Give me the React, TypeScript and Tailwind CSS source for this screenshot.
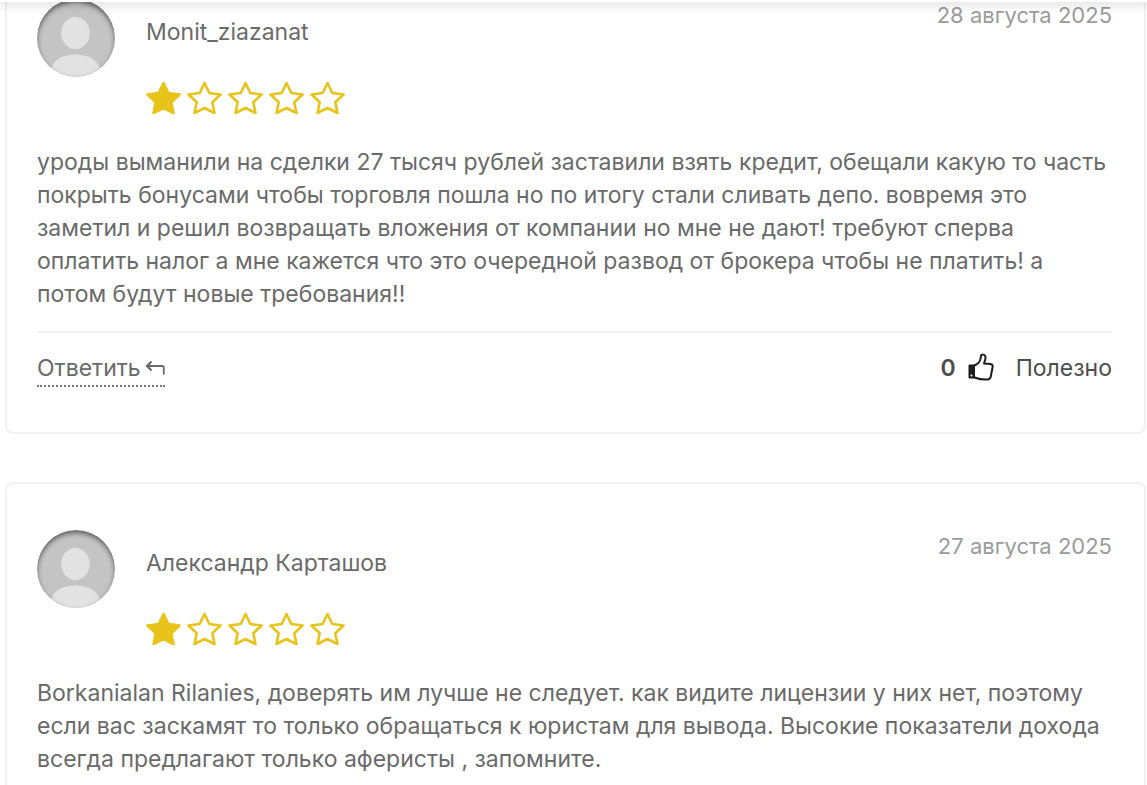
import clsx from "clsx";

interface Review {
  id: number;
  author: string;
  date: string;
  rating: number;
  text: string;
  useful?: number;
}

const reviews: Review[] = [
  {
    id: 1,
    author: "Monit_ziazanat",
    date: "28 августа 2025",
    rating: 1,
    text: "уроды выманили на сделки 27 тысяч рублей заставили взять кредит, обещали какую то часть покрыть бонусами чтобы торговля пошла но по итогу стали сливать депо. вовремя это заметил и решил возвращать вложения от компании но мне не дают! требуют сперва оплатить налог а мне кажется что это очередной развод от брокера чтобы не платить! а потом будут новые требования!!",
    useful: 0,
  },
  {
    id: 2,
    author: "Александр Карташов",
    date: "27 августа 2025",
    rating: 1,
    text: "Borkanialan Rilanies, доверять им лучше не следует. как видите лицензии у них нет, поэтому если вас заскамят то только обращаться к юристам для вывода. Высокие показатели дохода всегда предлагают только аферисты , запомните.",
  },
];

const stars = [1, 2, 3, 4, 5];

const Avatar = () => (
  <div className="relative size-[78px] shrink-0 overflow-hidden rounded-full bg-[#c4c4c4]">
    <svg viewBox="0 0 78 78" className="size-full" aria-hidden="true">
      <ellipse cx="38.5" cy="34" rx="14.3" ry="16" fill="#e2e2e2" />
      <path
        d="M14 72C15.500 60 27 55.500 38.500 55.500S61.500 60 63 72L58 78H19Z"
        fill="#e2e2e2"
      />
    </svg>
    <div className="absolute inset-0 rounded-full shadow-[inset_0_3px_5px_rgba(0,0,0,0.5)]" />
  </div>
);

const Star = ({ filled }: { filled: boolean }) => (
  <svg
    viewBox="0 0 35 34"
    className={clsx("h-[34px] w-[35px]", filled ? "fill-[#e8c41a]" : "fill-none")}
    aria-hidden="true"
  >
    <path
      d="M17.5 2L22.300 12L33.500 13.500L25.300 21.300L27.500 32L17.500 27L7.500 32L9.700 21.300L1.500 13.500L12.700 12Z"
      stroke="#e8c41a"
      strokeWidth="2.6"
      strokeLinejoin="round"
    />
  </svg>
);

const ReplyIcon = () => (
  <svg viewBox="0 0 20 16" className="h-4 w-5" fill="none" stroke="currentColor" aria-hidden="true">
    <path d="M2 5H17.500Q18.800 5 18.800 6.500V13.500" strokeWidth="1.8" />
    <path d="M6.500 0.500L2 5L6.500 9.500" strokeWidth="2.2" />
  </svg>
);

const ThumbIcon = () => (
  <svg viewBox="0 0 26 28" className="h-7 w-[26px]" fill="none" aria-hidden="true">
    <path d="M1 12H6.500V25H1Z" fill="#1c1c1c" stroke="#1c1c1c" strokeLinejoin="round" />
    <circle cx="3.5" cy="22.500" r="1" fill="#fff" />
    <path
      d="M6.500 12.500C10 11 12.500 8 12.800 4C13 0.800 17.200 0.800 17.500 4.200C17.600 6.500 16.500 8.500 16 10.500L22.500 11Q25 11.500 24.600 14L22.800 23.500Q22 26.500 19.500 26.600C15 26.700 11 26.300 6.500 24.500"
      stroke="#1c1c1c"
      strokeWidth="2"
      strokeLinejoin="round"
      strokeLinecap="round"
    />
  </svg>
);

const ReviewCard = ({ review }: { review: Review }) => (
  <article className="rounded-lg border-2 border-[#f1f1f1] pt-[46px] pr-8 pb-[45px] pl-[30px]">
    <header className="flex items-start">
      <Avatar />
      <div className="ml-[31px] flex-1 pt-[17px]">
        <h2>{review.author}</h2>
        <div
          className="mt-8 flex gap-[6px]"
          role="img"
          aria-label={`${review.rating} / ${stars.length}`}
        >
          {stars.map((star) => (
            <Star key={star} filled={star <= review.rating} />
          ))}
        </div>
      </div>
      <time className="text-[22px] text-[#9b9b9b]">{review.date}</time>
    </header>

    <p className="mt-[31px]">{review.text}</p>

    {review.useful !== undefined && (
      <footer className="mt-5 flex items-start justify-between border-t-2 border-[#f1f1f1] pt-[19px]">
        <button
          type="button"
          className="flex items-center gap-1 border-b-2 border-dotted border-[#777]"
        >
          Ответить
          <ReplyIcon />
        </button>
        <button type="button" className="flex items-center text-[#4d4d4d]">
          <span className="font-semibold">{review.useful}</span>
          <span className="mr-[22px] mb-1 ml-3">
            <ThumbIcon />
          </span>
          Полезно
        </button>
      </footer>
    )}
  </article>
);

const App = () => (
  <div className="relative h-screen overflow-hidden bg-white font-['Inter','Noto_Sans',sans-serif] text-[23px] leading-[33px] text-[#6a6a6a]">
    <div className="absolute inset-x-0 top-0 z-10 h-[2px] bg-white shadow-[0_1px_10px_2px_rgba(0,0,0,0.16)]" />
    <main className="-mt-[49px] flex flex-col gap-12 pr-px pl-[5px]">
      {reviews.map((review) => (
        <ReviewCard key={review.id} review={review} />
      ))}
    </main>
  </div>
);

export default App;
